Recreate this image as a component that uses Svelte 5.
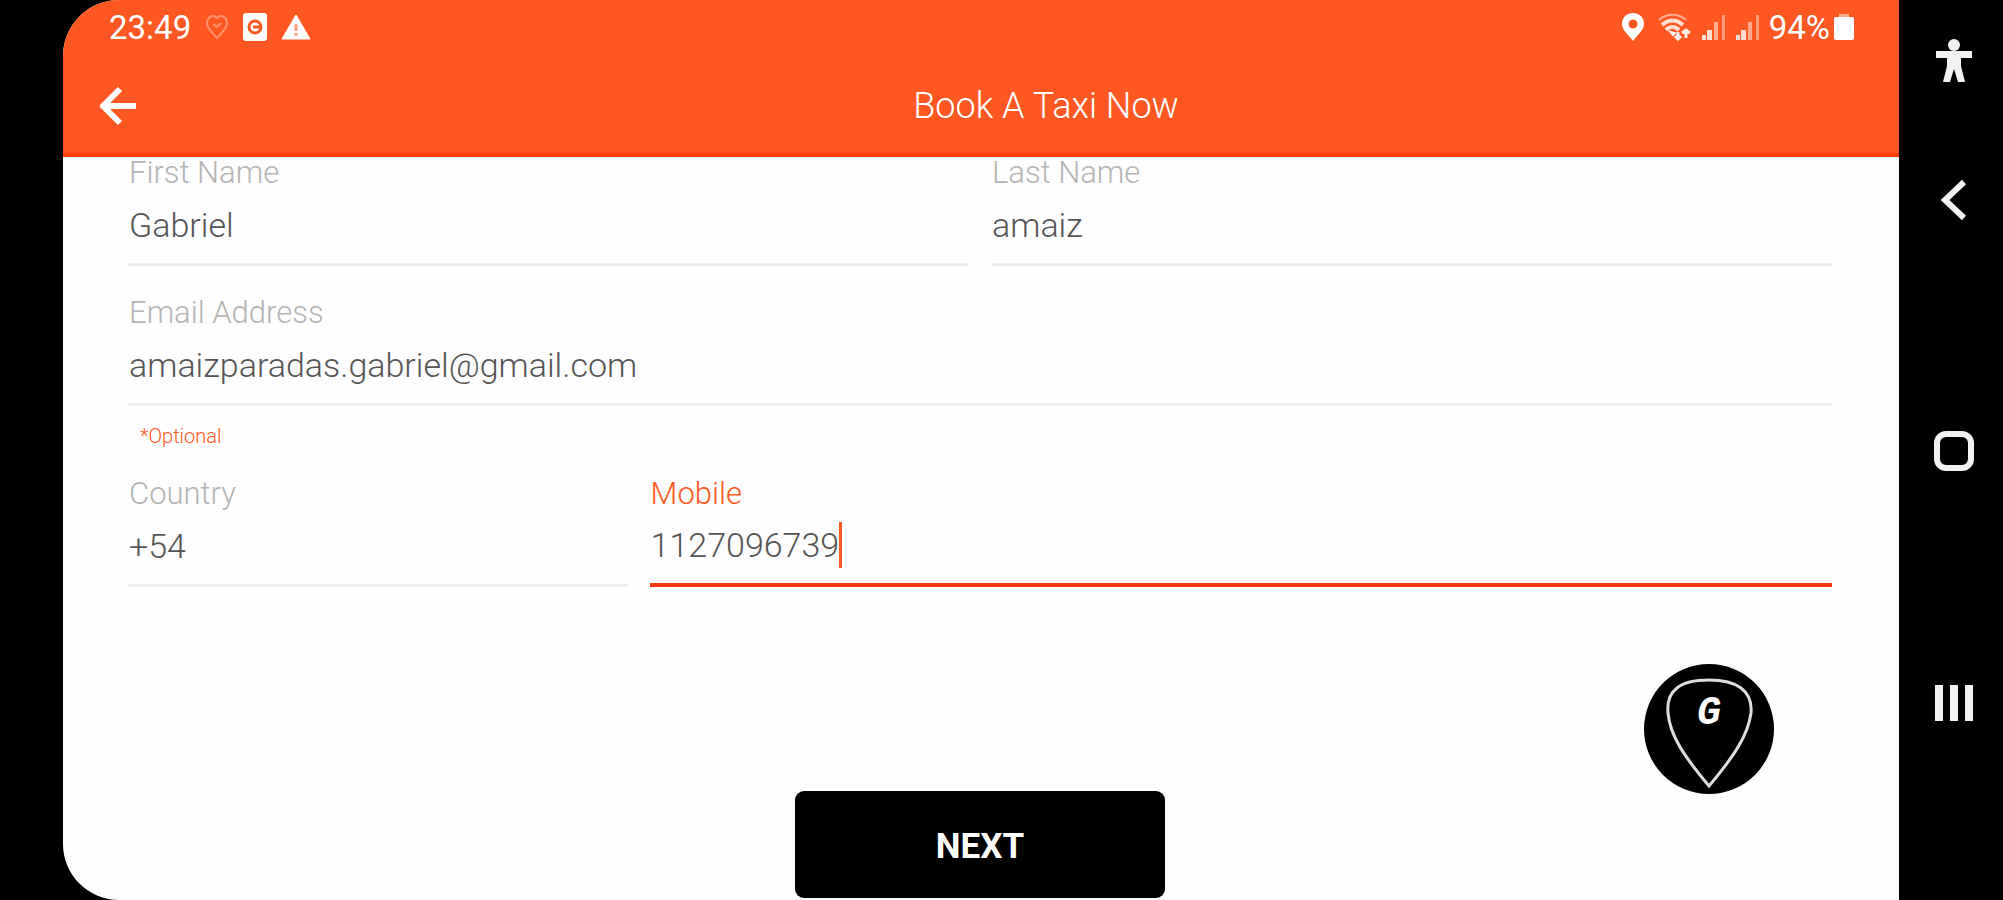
<script>
  let firstName = $state("Gabriel");
  let lastName = $state("amaiz");
  let email = $state("amaizparadas.gabriel@gmail.com");
  let country = $state("+54");
  let mobile = $state("1127096739");
</script>

<svelte:head>
  <title>Book A Taxi Now</title>
</svelte:head>

<div class="device">
  <main class="screen">
    <header>
      <div class="status">
        <span class="clock">23:49</span>
        <svg class="faint" width="24" height="26" viewBox="0 0 24 26" fill="none" stroke="#fff" stroke-width="2">
          <path d="M12 24C8 19 2 15 2 9c0-4 3-7 6-7 2 0 3 1 4 2 1-1 2-2 4-2 3 0 6 3 6 7 0 6-6 10-10 15z" />
          <path d="M8 10l4 3 4-4" />
        </svg>
        <svg width="24" height="28" viewBox="0 0 24 28">
          <rect width="24" height="28" rx="3" fill="#fff" />
          <circle cx="12" cy="14" r="6" fill="none" stroke="#ff5722" stroke-width="3" />
          <path d="M10 14h8" stroke="#ff5722" stroke-width="3" />
        </svg>
        <svg width="30" height="26" viewBox="0 0 30 26">
          <path d="M15 1L29 25H1z" fill="#fff" stroke="#fff" stroke-linejoin="round" />
          <path d="M15 10v7M15 19v3" stroke="#ff9e80" stroke-width="3" />
        </svg>

        <div class="signals">
          <svg width="24" height="28" viewBox="0 0 24 28">
            <path fill="#fff" fill-rule="evenodd" d="M12 0C5 0 1 5 1 11c0 6 6 10 11 17 5-7 11-11 11-17C23 5 19 0 12 0zm0 6.500a4.500 4.500 0 1 1 0 9 4.500 4.500 0 0 1 0-9z" />
          </svg>
          <svg class="wifi" width="34" height="28" viewBox="0 0 34 28" fill="none" stroke="#fff">
            <path d="M1 7C9 0 20 0 28 7" stroke-width="2" opacity=".5" />
            <path d="M4 12c7-6 14-6 21 0" stroke-width="4" opacity=".8" />
            <path d="M8 17c4-4 9-4 13 0" stroke-width="4" opacity=".8" />
            <path d="M11 18l4 5 3-3z" fill="#fff" />
            <path d="M20 19v7M17 23l3 3 3-3M28 25v-8M24 20l4-3 4 3" stroke-width="3" opacity=".9" />
          </svg>
          {#each [1, 2] as sim (sim)}
            <svg width="25" height="26" viewBox="0 0 25 26" fill="#fff">
              <path d="M1 21h4v5H1zM6 16h5v10H6z" opacity=".8" />
              <path d="M13 8h4v18h-4z" opacity=".5" />
              <path d="M21 1h3v25h-3z" opacity=".4" />
            </svg>
          {/each}
          <span class="charge">
            94%
            <svg width="20" height="26" viewBox="0 0 20 26">
              <path d="M5 0h10v3H5z" fill="#fff" opacity=".5" />
              <rect y="3" width="20" height="23" rx="2" fill="#fff" />
            </svg>
          </span>
        </div>
      </div>

      <div class="appbar">
        <button class="back" aria-label="Back">
          <svg width="40" height="40" viewBox="0 0 40 40" fill="none" stroke="#fff" stroke-width="6">
            <path d="M38 20H6M22 3L5 20l17 17" stroke-linejoin="round" />
          </svg>
        </button>
        <h1>Book A Taxi Now</h1>
      </div>
    </header>

    <form onsubmit={(e) => e.preventDefault()}>
      <div class="row names">
        <label class="field">
          <span class="caption">First Name</span>
          <span class="control"><input type="text" bind:value={firstName} /></span>
        </label>
        <label class="field">
          <span class="caption">Last Name</span>
          <span class="control"><input type="text" bind:value={lastName} /></span>
        </label>
      </div>

      <div>
        <label class="field">
          <span class="caption">Email Address</span>
          <span class="control"><input type="email" bind:value={email} /></span>
        </label>
        <p class="hint">*Optional</p>
      </div>

      <div class="row phone">
        <label class="field">
          <span class="caption">Country</span>
          <span class="control"><input type="text" bind:value={country} /></span>
        </label>
        <label class="field active">
          <span class="caption">Mobile</span>
          <span class="control">
            <input type="tel" bind:value={mobile} />
            <span class="caret"></span>
          </span>
        </label>
      </div>

      <button class="next" type="submit">NEXT</button>
    </form>

    <button class="assist" aria-label="Assistant">
      <svg width="132" height="132" viewBox="0 0 132 132">
        <circle cx="66" cy="66" r="65" fill="#000" />
        <path
          d="M66 17C52 17 41 19 34 25C26 31 24 39 25 50C27 72 40 92 66 123C92 92 105 72 108 50C109 39 106 31 98 25C90 19 80 17 66 17Z"
          fill="none"
          stroke="#ddd"
          stroke-width="3" />
        <text x="66" y="61" text-anchor="middle">G</text>
      </svg>
    </button>
  </main>

  <nav>
    <button aria-label="Accessibility">
      <svg width="36" height="44" viewBox="0 0 36 44" fill="#f2f2f2">
        <circle cx="18" cy="6" r="6" />
        <path d="M0 12h36v7H25v8l4 16h-7l-4-13-4 13H7l4-16v-8H0z" />
      </svg>
    </button>
    <div class="keys">
      <button aria-label="Back key">
        <svg width="36" height="44" viewBox="0 0 36 44" fill="none" stroke="#f2f2f2" stroke-width="6">
          <path d="M28 4L9 22l19 18" />
        </svg>
      </button>
      <button aria-label="Home">
        <svg width="40" height="44" viewBox="0 0 40 44" fill="none" stroke="#f2f2f2" stroke-width="6">
          <rect x="3" y="4" width="34" height="34" rx="9" />
        </svg>
      </button>
      <button aria-label="Recent apps">
        <svg width="40" height="44" viewBox="0 0 40 44" fill="#f2f2f2">
          <path d="M1 4h8v36H1zM16 4h8v36h-8zM31 4h8v36h-8z" />
        </svg>
      </button>
    </div>
  </nav>
</div>

<style>
  :global(body) {
    background: #000;
  }
  .device {
    display: flex;
    min-height: 100vh;
    padding-left: 63px;
    box-sizing: border-box;
    background: #000;
    font-family: Roboto, sans-serif;
  }
  .screen {
    position: relative;
    flex: 1;
    display: flex;
    flex-direction: column;
    border-radius: 56px 0 0 56px;
    overflow: hidden;
    background: #fefefe;
  }
  button {
    display: flex;
    align-items: center;
    justify-content: center;
    padding: 0;
    border: none;
    background: none;
    cursor: pointer;
  }
  svg {
    display: block;
    flex: none;
  }
  header {
    background: #ff5722;
    border-bottom: 4px solid #ff3d00;
    color: #fff;
  }
  .status {
    display: flex;
    align-items: center;
    gap: 14px;
    height: 54px;
    padding: 0 45px 0 46px;
    font-size: 33px;
  }
  .faint {
    opacity: 0.35;
  }
  .signals {
    display: flex;
    align-items: center;
    gap: 9px;
    margin-left: auto;
  }
  .wifi {
    margin-left: 4px;
  }
  .charge {
    display: flex;
    align-items: center;
    gap: 4px;
  }
  .appbar {
    display: flex;
    align-items: center;
    height: 99px;
    box-sizing: border-box;
    padding-top: 5px;
  }
  .back {
    width: 130px;
    height: 80px;
    justify-content: flex-start;
    padding-left: 35px;
  }
  h1 {
    flex: 1;
    margin: 0;
    text-align: center;
    font-size: 36px;
    font-weight: 300;
  }
  form {
    flex: 1;
    display: flex;
    flex-direction: column;
    gap: 31px;
    padding: 0 67px 2px 65px;
  }
  .row {
    display: grid;
    gap: 22px;
  }
  .names {
    grid-template-columns: 1fr 1fr;
  }
  .phone {
    grid-template-columns: 30fr 71fr;
  }
  .field {
    display: block;
    font-size: 31px;
    line-height: 32px;
    font-weight: 300;
    color: #b4b4b4;
  }
  .caption {
    display: block;
    padding-left: 1px;
  }
  .control {
    display: flex;
    align-items: center;
    height: 77px;
    box-sizing: border-box;
    padding: 0 0 3px 1px;
    border-bottom: 3px solid #eee;
  }
  input {
    width: 100%;
    padding: 0;
    border: none;
    outline: none;
    background: none;
    font: inherit;
    font-size: 34px;
    line-height: 40px;
    color: #555;
  }
  .active {
    color: #ff5722;
  }
  .active .control {
    border-bottom: 4px solid #f4380b;
  }
  .active input {
    width: auto;
    field-sizing: content;
  }
  .caret {
    width: 3px;
    height: 46px;
    background: #ff5722;
  }
  .hint {
    margin: 19px 0 0 12px;
    font-size: 20px;
    line-height: 22px;
    font-weight: 300;
    color: #ff5722;
  }
  .next {
    align-self: center;
    width: 370px;
    height: 107px;
    margin-top: auto;
    padding-top: 3px;
    border-radius: 9px;
    background: #000;
    color: #fff;
    font-family: inherit;
    font-size: 35px;
    font-weight: 700;
  }
  .assist {
    position: absolute;
    right: 124px;
    bottom: 105px;
    border-radius: 50%;
  }
  .assist text {
    fill: #fff;
    font: italic bold 40px "Liberation Mono", monospace;
  }
  nav {
    display: flex;
    flex-direction: column;
    width: 104px;
    padding: 39px 0 0 5px;
    box-sizing: border-box;
  }
  nav button {
    width: 100%;
    height: 44px;
  }
  .keys {
    flex: 1;
    display: flex;
    flex-direction: column;
    justify-content: space-between;
    padding: 95px 0 175px;
  }
</style>
